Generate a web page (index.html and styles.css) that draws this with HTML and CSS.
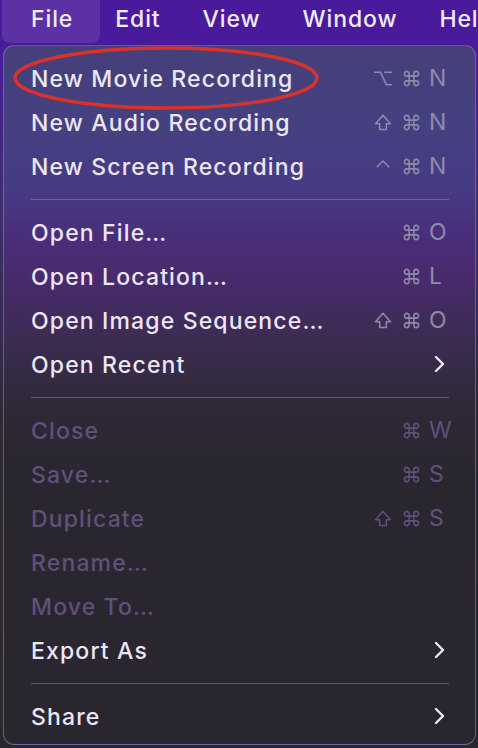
FILE: index.html
```html
<!DOCTYPE html>
<html lang="en">
<head>
<meta charset="utf-8">
<title>QuickTime File Menu</title>
<link rel="stylesheet" href="styles.css">
</head>
<body>
<div class="screen">
  <div class="menubar">
    <div class="mb-item active">File</div>
    <div class="mb-item">Edit</div>
    <div class="mb-item">View</div>
    <div class="mb-item">Window</div>
    <div class="mb-item">Help</div>
  </div>

  <div class="menu">
    <div class="row">
      <span class="label">New Movie Recording</span>
      <span class="keys">
        <svg class="mod" viewBox="0 0 24 24"><path d="M2 5h7l7 15h6M14 5h8"/></svg>
        <svg class="cmd" viewBox="0 0 24 24"><path d="M15 6v12a3 3 0 1 0 3-3H6a3 3 0 1 0 3 3V6a3 3 0 1 0-3 3h12a3 3 0 1 0-3-3"/></svg>
        <span class="key">N</span>
      </span>
    </div>
    <div class="row">
      <span class="label">New Audio Recording</span>
      <span class="keys">
        <svg class="mod" viewBox="0 0 24 24"><path d="M8 21v-7H3l9-10 9 10h-5v7z"/></svg>
        <svg class="cmd" viewBox="0 0 24 24"><path d="M15 6v12a3 3 0 1 0 3-3H6a3 3 0 1 0 3 3V6a3 3 0 1 0-3 3h12a3 3 0 1 0-3-3"/></svg>
        <span class="key">N</span>
      </span>
    </div>
    <div class="row">
      <span class="label">New Screen Recording</span>
      <span class="keys">
        <svg class="mod" viewBox="0 0 24 24"><path d="M5 13l7-7 7 7"/></svg>
        <svg class="cmd" viewBox="0 0 24 24"><path d="M15 6v12a3 3 0 1 0 3-3H6a3 3 0 1 0 3 3V6a3 3 0 1 0-3 3h12a3 3 0 1 0-3-3"/></svg>
        <span class="key">N</span>
      </span>
    </div>

    <div class="sep"></div>

    <div class="row">
      <span class="label">Open File…</span>
      <span class="keys">
        <span></span>
        <svg class="cmd" viewBox="0 0 24 24"><path d="M15 6v12a3 3 0 1 0 3-3H6a3 3 0 1 0 3 3V6a3 3 0 1 0-3 3h12a3 3 0 1 0-3-3"/></svg>
        <span class="key">O</span>
      </span>
    </div>
    <div class="row">
      <span class="label">Open Location…</span>
      <span class="keys">
        <span></span>
        <svg class="cmd" viewBox="0 0 24 24"><path d="M15 6v12a3 3 0 1 0 3-3H6a3 3 0 1 0 3 3V6a3 3 0 1 0-3 3h12a3 3 0 1 0-3-3"/></svg>
        <span class="key">L</span>
      </span>
    </div>
    <div class="row">
      <span class="label">Open Image Sequence…</span>
      <span class="keys">
        <svg class="mod" viewBox="0 0 24 24"><path d="M8 21v-7H3l9-10 9 10h-5v7z"/></svg>
        <svg class="cmd" viewBox="0 0 24 24"><path d="M15 6v12a3 3 0 1 0 3-3H6a3 3 0 1 0 3 3V6a3 3 0 1 0-3 3h12a3 3 0 1 0-3-3"/></svg>
        <span class="key">O</span>
      </span>
    </div>
    <div class="row">
      <span class="label">Open Recent</span>
      <svg class="chev" viewBox="0 0 13 18"><path d="M3 2l7 7-7 7"/></svg>
    </div>

    <div class="sep"></div>

    <div class="row disabled">
      <span class="label">Close</span>
      <span class="keys">
        <span></span>
        <svg class="cmd" viewBox="0 0 24 24"><path d="M15 6v12a3 3 0 1 0 3-3H6a3 3 0 1 0 3 3V6a3 3 0 1 0-3 3h12a3 3 0 1 0-3-3"/></svg>
        <span class="key">W</span>
      </span>
    </div>
    <div class="row disabled">
      <span class="label">Save…</span>
      <span class="keys">
        <span></span>
        <svg class="cmd" viewBox="0 0 24 24"><path d="M15 6v12a3 3 0 1 0 3-3H6a3 3 0 1 0 3 3V6a3 3 0 1 0-3 3h12a3 3 0 1 0-3-3"/></svg>
        <span class="key">S</span>
      </span>
    </div>
    <div class="row disabled">
      <span class="label">Duplicate</span>
      <span class="keys">
        <svg class="mod" viewBox="0 0 24 24"><path d="M8 21v-7H3l9-10 9 10h-5v7z"/></svg>
        <svg class="cmd" viewBox="0 0 24 24"><path d="M15 6v12a3 3 0 1 0 3-3H6a3 3 0 1 0 3 3V6a3 3 0 1 0-3 3h12a3 3 0 1 0-3-3"/></svg>
        <span class="key">S</span>
      </span>
    </div>
    <div class="row disabled">
      <span class="label">Rename…</span>
    </div>
    <div class="row disabled">
      <span class="label">Move To…</span>
    </div>
    <div class="row">
      <span class="label">Export As</span>
      <svg class="chev" viewBox="0 0 13 18"><path d="M3 2l7 7-7 7"/></svg>
    </div>

    <div class="sep"></div>

    <div class="row">
      <span class="label">Share</span>
      <svg class="chev" viewBox="0 0 13 18"><path d="M3 2l7 7-7 7"/></svg>
    </div>
  </div>

  <svg class="annotation" viewBox="0 0 478 748" width="478" height="748">
    <ellipse cx="166" cy="78" rx="151" ry="30"/>
  </svg>
</div>
</body>
</html>
```

FILE: styles.css
```css
* { box-sizing: border-box; }

html, body {
  margin: 0;
  padding: 0;
}

body {
  width: 478px;
  height: 748px;
  overflow: hidden;
  background: #2a2630;
  font-family: "Inter", "Noto Sans", sans-serif;
  -webkit-font-smoothing: antialiased;
}

.screen {
  position: relative;
  width: 478px;
  height: 748px;
  background: linear-gradient(180deg, #4a1a9c 0, #4a1a9c 44px, #3f2f70 200px, #2e2836 420px, #2a2630 100%);
}

/* ---------- menu bar ---------- */
.menubar {
  height: 44px;
  display: flex;
  align-items: flex-start;
  padding: 0 0 0 2px;
  background: #4a1a9c;
  overflow: hidden;
  white-space: nowrap;
}

.mb-item {
  flex: none;
  color: #efebf8;
  font-size: 23px;
  font-weight: 500;
  letter-spacing: 0.9px;
  padding: 0 21px 0 21px;
  height: 43px;
  line-height: 38px;
}

.mb-item.active {
  padding-left: 29px;
  padding-right: 27px;
  margin-right: -6px;
  border-radius: 0 0 8px 8px;
  background: rgba(255, 255, 255, 0.1);
}

/* ---------- drop-down menu ---------- */
.menu {
  margin: 1px 2px 0 3px;
  height: 700px;
  padding: 10px 26px 6px 27px;
  border: 1px solid rgba(150, 135, 190, 0.55);
  border-radius: 11px;
  background: linear-gradient(180deg,
    #45407a 0,
    #454080 85px,
    #463a85 145px,
    #4a2d78 195px,
    #472a68 245px,
    #3d2c55 285px,
    #352b45 325px,
    #2d2834 375px,
    #2a2630 435px,
    #2a2630 100%);
}

.row {
  height: 44px;
  display: flex;
  align-items: center;
  justify-content: space-between;
  color: #ece6f6;
  font-size: 23px;
  font-weight: 500;
  letter-spacing: 1.15px;
  white-space: nowrap;
}

.label {
  padding-top: 1px;
}

.row.disabled {
  color: #5f5179;
}

.keys {
  display: grid;
  grid-template-columns: 22px 19px 20px;
  column-gap: 8px;
  align-items: center;
  color: #8f8bab;
}

.row.disabled .keys {
  color: #5f5179;
}

.keys svg {
  display: block;
  fill: none;
  stroke: currentColor;
  stroke-linecap: round;
  stroke-linejoin: round;
}

.keys .mod {
  width: 22px;
  height: 20px;
  stroke-width: 1.8;
}

.keys .cmd {
  width: 19px;
  height: 19px;
  stroke-width: 1.9;
}

.keys .key {
  font-size: 23px;
  font-weight: 400;
  letter-spacing: 0;
  line-height: 1;
  padding-top: 1px;
}

.chev {
  width: 13px;
  height: 18px;
  margin-right: 3px;
  fill: none;
  stroke: #ece6f6;
  stroke-width: 2.4;
  stroke-linecap: round;
  stroke-linejoin: round;
}

.sep {
  height: 22px;
  display: flex;
  align-items: center;
}

.sep::before {
  content: "";
  display: block;
  width: 100%;
  height: 1px;
  margin-right: -1px;
  background: rgba(190, 175, 225, 0.35);
}

/* ---------- red annotation ---------- */
.annotation {
  position: absolute;
  left: 0;
  top: 0;
  pointer-events: none;
}

.annotation ellipse {
  fill: none;
  stroke: #d8322a;
  stroke-width: 3.4;
}
```
